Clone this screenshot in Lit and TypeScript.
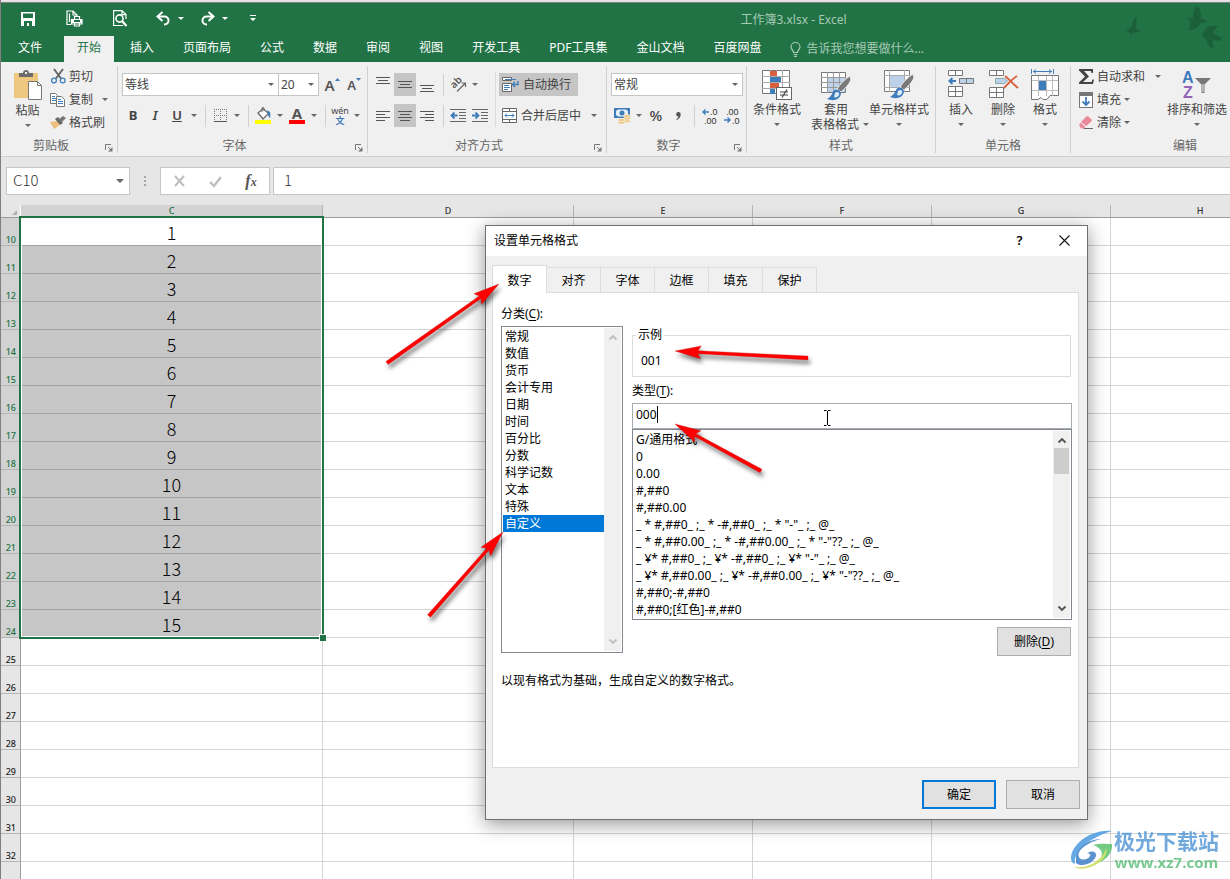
import { LitElement, html, svg, css, nothing } from "lit";
import { customElement, state } from "lit/decorators.js";
import { classMap } from "lit/directives/class-map.js";

/* ---------- shared styles ---------- */

const base = css`
  * { box-sizing: border-box; }
  button, input, select {
    font: inherit; color: inherit; margin: 0; padding: 0; border: 0;
    background: none; border-radius: 0; outline: none;
  }
  svg { display: block; flex: none; overflow: visible; }
  ul { list-style: none; margin: 0; padding: 0; }
`;

/* ---------- icons ---------- */

const icon = (w: number, h: number, body: unknown) =>
  html`<svg width=${w} height=${h} viewBox="0 0 ${w} ${h}" aria-hidden="true">${body}</svg>`;

const caret = (color = "#666") => icon(6, 3, svg`<path d="M0 0h6L3 3z" fill=${color} />`);

const lines = (y0: number, widths: number[][], step = 4) =>
  icon(14, 16, widths.map(([x, w], i) => svg`<rect x=${x} y=${y0 + i * step} width=${w} height="1" fill="#555" />`));

const brushTip = (x: number, y: number) => svg`
  <g transform="translate(${x} ${y})">
    <path d="M23 0 C18 3 13 8 10 13 L14 16 C19 12 22 8 24 4 Z" fill="#7a7a7a" stroke="#f0f0f0" stroke-width="1" />
    <path d="M8 14 C5 15 6 20 0 23 C5 25 12 25 14 18 C14 14 11 13 8 14Z" fill="#3f7cba" />
    <path d="M8 17 c2 -2 5 -1 4 2 c-1 2 -3 3 -5 2" fill="#dce9f6" />
  </g>`;

const icons = {
  save: icon(14, 14, svg`
    <path d="M0 0h14v14H0z" fill="#fff" />
    <path d="M2 1.500h10v4.500H2zM3 9h8v5H8v-3H6v3H3z" fill="#217346" />`),
  quickPrint: icon(17, 17, svg`
    <g fill="none" stroke="#fff" stroke-width="1.2">
      <path d="M5 14.5H1V1h6l4 4v2M3.500 12V3.500M7 1v4h4" />
      <path d="M5.500 9.500h10.500v4.500H5.500zM8.500 9.500v-3h5v3M8.500 12.500h5v3.500h-5z" />
    </g>
    <path d="M6 10h2v3H6zM14 10h2v3h-2z" fill="#fff" />`),
  preview: icon(14, 17, svg`
    <g fill="none" stroke="#fff" stroke-width="1.2">
      <path d="M10 15.500H.6V.6h8.400l4 4V9M9 .6v4h4" />
      <circle cx="6.500" cy="8.500" r="3.600" stroke-width="1.600" />
      <path d="M9 11l4.500 5" stroke-width="2.200" />
    </g>`),
  undo: icon(15, 13, svg`
    <path d="M2 4.500h6.500a4 4 0 0 1 0 8H8" fill="none" stroke="#fff" stroke-width="2" />
    <path d="M6.500 0L1.500 4.500L6.500 9" fill="none" stroke="#fff" stroke-width="2" />`),
  redo: icon(15, 13, svg`
    <path d="M13 4.500H6.500a4 4 0 0 0 0 8H7" fill="none" stroke="#fff" stroke-width="2" />
    <path d="M8.500 0L13.500 4.500L8.500 9" fill="none" stroke="#fff" stroke-width="2" />`),
  customize: icon(6, 7, svg`<path d="M0 0h6v1H0zM0 3h6L3 6z" fill="#fff" />`),
  bulb: icon(11, 15, svg`
    <path d="M3.500 10.500C3.500 8 1 7.500 1 5a4.500 4.500 0 0 1 9 0c0 2.500-2.500 3-2.500 5.500z M3.500 12.500h4M4 14.300h3" fill="none" stroke="#a7cab5" stroke-width="1.200" />`),
  paste: icon(28, 31, svg`
    <rect x="0" y="3" width="24" height="25" fill="#edc87e" />
    <path d="M5 7V3h4c0-4 6-4 6 0h4v4z" fill="#6b6b6b" /><rect x="11" y="2" width="2" height="2" fill="#f0f0f0" />
    <path d="M14.500 11.500h9l4 4v14h-13z" fill="#fff" stroke="#777" /><path d="M23.500 11.500v4h4" fill="none" stroke="#777" />`),
  cut: icon(15, 15, svg`
    <path d="M3 0L10 9.500M12 0L5 9.500" stroke="#666" stroke-width="2" />
    <g fill="none" stroke="#3f7cba" stroke-width="1.300"><circle cx="3" cy="11.500" r="2.400" /><circle cx="11.700" cy="11.500" r="2.400" /></g>`),
  copy: icon(16, 14, svg`
    <path d="M.5 .5h5l2 2v8h-7z" fill="#fff" stroke="#777" />
    <path d="M2 3.500h3M2 5.500h4M2 7.500h4" stroke="#3f7cba" />
    <path d="M6.500 3.500h5l3 3v7h-8z" fill="#fff" stroke="#777" />
    <path d="M8 6.500h3M8 8.500h5M8 10.500h5" stroke="#3f7cba" />`),
  brush: icon(16, 13, svg`
    <path d="M0 6l7-1 3 4-6 4z" fill="#edc07e" />
    <path d="M5 3l3-2 5 6-3 2z" fill="#666" />
    <path d="M9 3l4-3 3 2-4 4z" fill="#777" />`),
  borders: icon(13, 13, svg`
    <g fill="none" stroke="#777" stroke-dasharray="1 1"><path d="M.5 0v12M6.500 0v12M12.500 0v12M0 .5h13M0 6.500h13" /></g>
    <path d="M0 12.500h13" stroke="#555" />`),
  fill: icon(17, 17, svg`
    <path d="M3 6L8 1.500l5.500 5L8 12z" fill="#fff" stroke="#666" stroke-width="1.200" />
    <path d="M7 5V1.500C7 0 9 0 9 1.500V4" fill="none" stroke="#666" />
    <path d="M12 3.500c3 0 4 3 3 7.500-1-1-2-2-2-4z" fill="#3f7cba" />
    <rect x="0" y="13" width="16" height="4" fill="#ffff00" />`),
  grow: icon(5, 3, svg`<path d="M0 3h5L2.500 0z" fill="#3f7cba" />`),
  shrink: icon(5, 3, svg`<path d="M0 0h5L2.500 3z" fill="#3f7cba" />`),
  top: lines(0, [[0, 14], [2, 10], [0, 14]], 3),
  middle: lines(4, [[0, 14], [2, 10], [0, 14]], 3),
  bottom: lines(8, [[0, 14], [2, 10], [0, 14]], 3),
  left: lines(3, [[0, 14], [0, 9], [0, 14], [0, 9]], 3),
  center: lines(3, [[0, 14], [2, 10], [0, 14], [2, 10]], 3),
  right: lines(3, [[0, 14], [5, 9], [0, 14], [5, 9]], 3),
  orient: icon(16, 16, svg`
    <text x="0" y="0" transform="translate(4 12) rotate(-45)" font-size="10" font-weight="600" fill="#555">ab</text>
    <path d="M7 14.500L15 6.500M11.500 6h4v4" fill="none" stroke="#666" stroke-width="1.200" />`),
  outdent: icon(16, 13, svg`
    <path d="M0 .5h16M9 3.500h7M9 6.500h7M9 9.500h7M0 12.500h16" stroke="#666" />
    <path d="M7.500 6.500H2M4.500 3.500l-3 3 3 3" fill="none" stroke="#3f7cba" stroke-width="1.800" />`),
  indent: icon(16, 13, svg`
    <path d="M0 .5h16M9 3.500h7M9 6.500h7M9 9.500h7M0 12.500h16" stroke="#666" />
    <path d="M0 6.500h6M3.500 3.500l3 3-3 3" fill="none" stroke="#3f7cba" stroke-width="1.800" />`),
  wrap: icon(17, 15, svg`
    <path d="M.5 .5h9v3h-9zM.5 6.500h9v8h-9z" fill="#fff" stroke="#666" />
    <path d="M2 8.500h5M2 10.500h6M2 12.500h4M3 2.500h11" stroke="#3f7cba" />
    <path d="M16 4v3.500h-5M13 5l-2.500 2.500L13 10" fill="none" stroke="#3f7cba" stroke-width="1.400" />`),
  merge: icon(15, 15, svg`
    <path d="M.5 .5h14v14H.5zM0 3.500h15M0 11.500h15M7.500 0v3.500M7.500 11.500v3" fill="#fff" stroke="#666" />
    <path d="M3 7.500h9M5 5.500l-2 2 2 2M10 5.500l2 2-2 2" fill="none" stroke="#3f7cba" />`),
  currency: icon(17, 16, svg`
    <rect x="0" y="0" width="16" height="10" fill="#3f7cba" /><path d="M2 3l2-1.500h8L14 3v4l-2 1.500H4L2 7z" fill="#e6eff8" />
    <circle cx="8" cy="5" r="2.500" fill="#3f7cba" />
    <g fill="#edc87e" stroke="#f0f0f0" stroke-width=".7"><ellipse cx="13" cy="13" rx="3.500" ry="1.600" /><ellipse cx="13" cy="10.500" rx="3.500" ry="1.600" /><ellipse cx="13" cy="8" rx="3.500" ry="1.600" /><ellipse cx="7.500" cy="14.500" rx="3.500" ry="1.600" /><ellipse cx="7.500" cy="12" rx="3.500" ry="1.600" /></g>`),
  incDec: icon(15, 14, svg`
    <path d="M7 3H1M3.500 .5L1 3l2.500 2.500" fill="none" stroke="#3f7cba" stroke-width="1.400" />
    <g font-family="Liberation Sans" font-size="9" fill="#333"><text x="8" y="6">.0</text><text x="2" y="15">.00</text></g>`),
  decDec: icon(15, 14, svg`
    <path d="M0 11h6M3.500 8.500L6 11l-2.500 2.500" fill="none" stroke="#3f7cba" stroke-width="1.400" />
    <g font-family="Liberation Sans" font-size="9" fill="#333"><text x="2" y="6">.00</text><text x="8" y="15">.0</text></g>`),
  conditional: icon(30, 30, svg`
    <path d="M.5 .5h27v23h-27z" fill="#fff" stroke="#777" />
    <path d="M8.500 0v24M14.500 0v24M20.500 0v24M0 6.500h28M0 12.500h28M0 18.500h28" stroke="#aaa" />
    <path d="M8 1h7v5H8zM8 13h9v5H8z" fill="#d9603f" /><path d="M8 7h11v5H8zM8 19h5v5H8z" fill="#3f7cba" />
    <rect x="14.500" y="17.500" width="15" height="12" fill="#fff" stroke="#666" />
    <path d="M18 22h8M18 25h8M25 19.500l-5 8" stroke="#444" stroke-width="1.200" />`),
  tableFormat: icon(30, 30, svg`
    <path d="M.5 2.500h24v20h-24z" fill="#fff" stroke="#777" /><path d="M6 7h18v15H6z" fill="#bdd2ea" />
    <path d="M6.500 2v21M12.500 2v21M18.500 2v21M0 7.500h25M0 12.500h25M0 17.500h25" stroke="#999" />
    ${brushTip(6, 6)}`),
  cellStyles: icon(30, 30, svg`
    <path d="M.5 .5h25v21h-25z" fill="#fff" stroke="#777" /><path d="M6 6h14v11H6z" fill="#bdd2ea" />
    <path d="M5.500 0v22M20.500 0v22M0 5.500h26M0 17.500h26" stroke="#aaa" />
    ${brushTip(6, 4)}`),
  insert: icon(26, 30, svg`
    <g fill="#fff" stroke="#777"><path d="M.5 .5h14v5H.5zM7.500 .5v5M.5 16.500h14v10H.5zM7.500 16.500v10M.5 21.500h14" /></g>
    <path d="M11.500 8.500h14v5h-14zM18.500 8.500v5" fill="#bdd2ea" stroke="#777" />
    <path d="M8 11H2M4.500 8l-3 3 3 3" fill="none" stroke="#3f7cba" stroke-width="2" />`),
  remove: icon(29, 30, svg`
    <g fill="#fff" stroke="#777"><path d="M.5 .5h14v5H.5zM7.500 .5v5M.5 17.500h14v10H.5zM7.500 17.500v10M.5 22.500h14" /></g>
    <path d="M6.500 8.500h9l3 2.500-3 2.500h-9z" fill="#bdd2ea" stroke="#8aa" />
    <path d="M16 6c4 3 8 8 13 12M28 6c-5 3-9 8-13 12" fill="none" stroke="#d9603f" stroke-width="2" />`),
  format: icon(28, 30, svg`
    <path d="M.5 -1v5M22.500 -1v5M2 1.500h19M5 -.5L2.500 1.500 5 3.500M18 -.5l2.500 2-2.500 2" fill="none" stroke="#3f7cba" />
    <path d="M.5 5.500h27v20H19l-3 4h-4l-2-2-3 2H.5z" fill="#fff" stroke="#777" />
    <path d="M7.500 6v20M15.500 6v20M21.500 6v20M1 10.500h26M1 20.500h26" stroke="#bbb" />
    <rect x="8" y="11" width="7" height="9" fill="#3f7cba" />`),
  sum: icon(15, 15, svg`<path d="M0 0h14v4h-1.500l-.5-2H5l5 5.500L4 13h8.500l1-2.500H15L14 15H0v-1.500l6-6L0 1.500z" fill="#444" />`),
  fillDown: icon(14, 16, svg`
    <rect x=".5" y=".5" width="13" height="15" fill="#fff" stroke="#777" /><rect x="0" y="0" width="14" height="4" fill="#777" />
    <path d="M7 5v8M3.500 9.500L7 13l3.500-3.500" fill="none" stroke="#3f7cba" stroke-width="1.800" />`),
  clear: icon(14, 13, svg`
    <path d="M7 .8L9 0l4 4-1 2-5 4-5-4z" fill="#e88a9c" /><path d="M1.500 6.500l5 4.500-1.500 1.500H2L0 9z" fill="#e88a9c" />
    <path d="M5 12.500h9" stroke="#666" />`),
  sort: icon(30, 30, svg`
    <g font-family="Liberation Sans" font-size="16" font-weight="700">
      <text x="0" y="13" fill="#3f7cba">A</text>
      <text x="1" y="28" fill="#9363b8">Z</text>
    </g>
    <path d="M13 8h16l-6.500 6.500V23h-3v-8.500z" fill="#777" /><path d="M20.500 14v8h1v-8z" fill="#f0f0f0" />`),
  comma: icon(5, 8, svg`<path d="M2.500 0a2.200 2.200 0 0 1 2.200 2.300C4.700 5 3 7 .8 8l-.5-.8C1.500 6.500 2.200 5.500 2.300 4.500A2.200 2.200 0 0 1 2.500 0z" fill="#555" />`),
  launcher: icon(8, 8, svg`
    <path d="M.5 6V.5H6" fill="none" stroke="#777" /><path d="M3 3l3 3" stroke="#777" /><path d="M7.500 3v4.500H3L7.500 3z" fill="#777" />`),
  cancel: icon(11, 10, svg`<path d="M1 0l9 10M10 0L1 10" stroke="#bdbdbd" stroke-width="2" />`),
  accept: icon(13, 11, svg`<path d="M1 6l4 4 7-9" fill="none" stroke="#bdbdbd" stroke-width="2.400" />`),
  close: icon(11, 11, svg`<path d="M.5 .5l10 10M10.500 .5l-10 10" stroke="#111" stroke-width="1.100" />`),
};

const chevron = (up: boolean, color: string) =>
  icon(8, 5, svg`<path d=${up ? "M.5 4.500L4 1l3.500 3.500" : "M.5 .5L4 4 7.500 .5"} fill="none" stroke=${color} stroke-width="1.800" />`);

/* ---------- title bar, tabs and ribbon ---------- */

@customElement("xl-ribbon")
export class XlRibbon extends LitElement {
  static styles = [base, css`
    :host { display: block; flex: none; overflow: hidden; }
    .top { position: relative; background: #217346; color: #fff; }
    .title-row { display: flex; align-items: center; height: 33px; padding: 0 0 2px 17px; }
    .quick { display: flex; align-items: center; gap: 26px; }
    .quick button, .history button { display: grid; place-items: center; height: 20px; }
    .quick .q { width: 20px; }
    .history { display: flex; align-items: center; margin-left: 23px; gap: 3px; }
    .history .q { width: 20px; }
    .history .drop { width: 10px; margin-right: 8px; }
    .history .custom { width: 10px; margin-left: 7px; }
    .title { flex: 1; padding: 2px 0 0 99px; text-align: center; color: #a7cab5; line-height: 20px; }
    .birds { position: absolute; top: 0; right: 8px; pointer-events: none; }
    .tabs { display: flex; height: 26px; align-items: stretch; }
    .tabs button { padding: 0 13px; margin-right: 3px; line-height: 24px; padding-bottom: 2px; white-space: nowrap; }
    .tabs .file { padding: 0 19px 2px 17px; }
    .tabs .on { background: #f0f0f0; color: #217346; }
    .tell { display: flex; align-items: center; gap: 5px; margin-left: 13px; color: #a7cab5; }
    .tell input { width: 160px; color: #a7cab5; }
    .tell input::placeholder { color: #a7cab5; opacity: 1; }

    .ribbon { display: flex; height: 95px; background: #f0f0f0; border-bottom: 1px solid #d0d0d0; color: #444; padding-top: 4px; }
    .group { display: flex; flex-direction: column; height: 87px; flex: none; border-right: 1px solid #d0d0d0; }
    .group:last-child { border-right: 0; }
    .body { flex: 1; display: flex; padding-left: 4px; }
    .foot { display: flex; align-items: center; height: 16px; color: #666; }
    .foot span { flex: 1; text-align: center; line-height: 16px; padding-top: 1px; }
    .foot button { width: 16px; height: 16px; display: grid; place-items: center; padding: 5px 0 0 0; }
    .g-clip { width: 117px; } .g-font { width: 250px; } .g-align { width: 239px; }
    .g-num { width: 140px; } .g-style { width: 189px; } .g-cell { width: 135px; } .g-edit { width: 228px; }

    .rows { display: flex; flex-direction: column; gap: 8px; padding-top: 7px; }
    .row { display: flex; align-items: center; height: 23px; }
    .ib { display: grid; place-items: center; width: 22px; height: 23px; }
    .ib.on { background: #c5c5c5; }
    .ib.text { font-size: 13px; line-height: 16px; color: #444; padding-bottom: 2px; }
    .ib.pct { font-size: 15px; font-weight: 500; }
    .b { font-weight: 700; } .i { font-style: italic; font-weight: 600; } .u { text-decoration: underline; font-weight: 600; }
    .dr { display: grid; place-items: center; width: 12px; height: 23px; }
    .sep { width: 1px; height: 22px; background: #d0d0d0; margin: 0 3px 0 5px; }
    .tall { width: 1px; height: 55px; background: #dadada; margin: 6px 3px 0 4px; }
    .combo { display: grid; }
    .combo > * { grid-area: 1 / 1; }
    .combo > svg { justify-self: end; align-self: center; margin-right: 5px; pointer-events: none; }
    .combo select { height: 23px; appearance: none; background: #fff; border: 1px solid #c6c6c6; padding-left: 2px; width: 100%; }
    .wide { width: 157px; } .narrow { width: 41px; margin-left: -1px; margin-right: 2px; } .fmt { width: 132px; }
    .size { display: flex; align-items: flex-start; justify-content: center; padding-top: 1px; color: #555; font-weight: 600; font-size: 15px; line-height: 22px; }
    .size svg { margin-top: 4px; }
    .size.small { font-size: 13px; }
    .color { font-weight: 700; font-size: 15px; line-height: 13px; color: #555; }
    .color span { display: block; width: 16px; text-align: center; border-bottom: 4px solid #f00; }
    .wen { font-size: 9px; line-height: 10px; text-align: center; align-content: center; }
    .wen b { display: block; color: #3f7cba; font-size: 9px; }
    .labelled { display: flex; align-items: center; gap: 4px; height: 23px; padding: 0 7px 0 3px; white-space: nowrap; }
    .labelled.on { background: #c5c5c5; }

    .big { display: flex; flex-direction: column; align-items: center; padding-top: 4px; line-height: 15px; white-space: nowrap; }
    .big .lab { display: block; margin-top: 2px; }
    .big .under { height: 15px; display: grid; place-items: center; }
    .big .inline { display: flex; align-items: center; gap: 4px; padding-left: 8px; }
    .paste, .insert { width: 42px; }
    .paste { width: 45px; }
    .cond { width: 52px; } .table { width: 66px; } .style { width: 60px; }
    .sort { width: 68px; }
    .stack { display: flex; flex-direction: column; }
    .stack > div { display: flex; align-items: center; height: 23px; padding-bottom: 2px; }
    .mini { display: flex; align-items: center; gap: 3px; height: 21px; line-height: 20px; white-space: nowrap; }
    .mini > span:first-child { width: 16px; display: grid; place-items: center; }
    .clip .dr { margin-left: 6px; }
    .edit { width: 88px; padding-left: 3px; }
    .edit > div:first-child .dr { margin-left: 7px; }
  `];

  private big(label: string, art: unknown, kind: string, second = "") {
    return html`<button class="big ${kind}">
      ${art}
      <span class="lab">${label}</span>
      ${second
        ? html`<span class="inline">${second}${caret()}</span>`
        : html`<span class="under">${caret()}</span>`}
    </button>`;
  }

  private ib(label: string, art: unknown, on = false) {
    return html`<button class=${classMap({ ib: true, on })} aria-label=${label}>${art}</button>`;
  }

  private drop(label: string) {
    return html`<button class="dr" aria-label=${label}>${caret()}</button>`;
  }

  private foot(label: string, launcher = true) {
    return html`<div class="foot"><span>${label}</span>${launcher
      ? html`<button aria-label="${label}设置">${icons.launcher}</button>` : nothing}</div>`;
  }

  private mini(label: string, art: unknown, drop = false) {
    return html`<div><button class="mini"><span>${art}</span><span>${label}</span></button>${drop ? this.drop(label) : nothing}</div>`;
  }

  render() {
    const tabs = ["开始", "插入", "页面布局", "公式", "数据", "审阅", "视图", "开发工具", "PDF工具集", "金山文档", "百度网盘"];
    return html`
      <header class="top">
        <svg class="birds" width="100" height="52" viewBox="1122 3 100 52" aria-hidden="true">
          <g fill="#1b6039">
            <path d="M1125 29c3 1 5 0 7-3 0-4 2-8 5-9 0 5-2 9 0 12l4 3-8 1-2 2-2-3z" />
            <path d="M1186 18c3 0 5 1 7 0 0-5 1-9 4-12 4 4 4 8 4 12l6 3c-2 3-5 2-7 2-1 4-5 7-12 7 2-3 3-6 2-9z" />
            <path d="M1202 34c3-3 4-7 8-8h9c-4 2-6 5-5 8l8 4-2 3c-3-1-6-1-8 0 0 3 2 5 2 8-5-2-8-6-8-11l-2 1z" />
          </g>
        </svg>
        <div class="title-row">
          <div class="quick">
            <button class="q" aria-label="保存">${icons.save}</button>
            <button class="q" aria-label="快速打印">${icons.quickPrint}</button>
            <button class="q" aria-label="打印预览">${icons.preview}</button>
          </div>
          <div class="history">
            <button class="q" aria-label="撤消">${icons.undo}</button>
            <button class="drop" aria-label="撤消列表">${caret("#fff")}</button>
            <button class="q" aria-label="恢复">${icons.redo}</button>
            <button class="drop" aria-label="恢复列表">${caret("#fff")}</button>
            <button class="custom" aria-label="自定义快速访问工具栏">${icons.customize}</button>
          </div>
          <div class="title">工作簿3.xlsx - Excel</div>
        </div>
        <nav class="tabs">
          <button class="file">文件</button>
          ${tabs.map((t, i) => html`<button class=${classMap({ on: i === 0 })}>${t}</button>`)}
          <label class="tell">${icons.bulb}<input aria-label="告诉我" placeholder="告诉我您想要做什么..." /></label>
        </nav>
      </header>

      <div class="ribbon">
        <section class="group g-clip">
          <div class="body">
            ${this.big("粘贴", icons.paste, "paste")}
            <div class="stack clip">
              ${this.mini("剪切", icons.cut)}
              ${this.mini("复制", icons.copy, true)}
              ${this.mini("格式刷", icons.brush)}
            </div>
          </div>
          ${this.foot("剪贴板")}
        </section>

        <section class="group g-font">
          <div class="body rows">
            <div class="row">
              <span class="combo wide"><select aria-label="字体"><option>等线</option></select>${caret()}</span>
              <span class="combo narrow"><select aria-label="字号"><option>20</option></select>${caret()}</span>
              <button class="ib size" aria-label="增大字号">A${icons.grow}</button>
              <button class="ib size small" aria-label="减小字号">A${icons.shrink}</button>
            </div>
            <div class="row">
              <button class="ib text b">B</button>
              <button class="ib text i">I</button>
              <button class="ib text u">U</button>
              ${this.drop("下划线")}
              <span class="sep"></span>
              ${this.ib("边框", icons.borders)}${this.drop("边框选项")}
              <span class="sep"></span>
              ${this.ib("填充颜色", icons.fill)}${this.drop("填充颜色选项")}
              <button class="ib color" aria-label="字体颜色"><span>A</span></button>${this.drop("字体颜色选项")}
              <span class="sep"></span>
              <button class="ib wen" aria-label="拼音">wén<b>文</b></button>${this.drop("拼音选项")}
            </div>
          </div>
          ${this.foot("字体")}
        </section>

        <section class="group g-align">
          <div class="body">
            <div class="rows">
              <div class="row">
                ${this.ib("顶端对齐", icons.top)}${this.ib("垂直居中", icons.middle, true)}${this.ib("底端对齐", icons.bottom)}
                <span class="sep"></span>
                ${this.ib("方向", icons.orient)}${this.drop("方向选项")}
              </div>
              <div class="row">
                ${this.ib("左对齐", icons.left)}${this.ib("居中", icons.center, true)}${this.ib("右对齐", icons.right)}
                <span class="sep"></span>
                ${this.ib("减少缩进量", icons.outdent)}${this.ib("增加缩进量", icons.indent)}
              </div>
            </div>
            <span class="tall"></span>
            <div class="rows">
              <div class="row"><button class="labelled on">${icons.wrap}<span>自动换行</span></button></div>
              <div class="row"><button class="labelled">${icons.merge}<span>合并后居中</span></button>${this.drop("合并选项")}</div>
            </div>
          </div>
          ${this.foot("对齐方式")}
        </section>

        <section class="group g-num">
          <div class="body rows">
            <div class="row"><span class="combo fmt"><select aria-label="数字格式"><option>常规</option></select>${caret()}</span></div>
            <div class="row">
              ${this.ib("会计数字格式", icons.currency)}${this.drop("货币")}
              <button class="ib text pct">%</button>
              ${this.ib("千位分隔样式", icons.comma)}
              <span class="sep"></span>
              ${this.ib("增加小数位数", icons.incDec)}${this.ib("减少小数位数", icons.decDec)}
            </div>
          </div>
          ${this.foot("数字")}
        </section>

        <section class="group g-style">
          <div class="body">
            ${this.big("条件格式", icons.conditional, "cond")}
            ${this.big("套用", icons.tableFormat, "table", "表格格式")}
            ${this.big("单元格样式", icons.cellStyles, "style")}
          </div>
          ${this.foot("样式", false)}
        </section>

        <section class="group g-cell">
          <div class="body">
            ${this.big("插入", icons.insert, "insert")}
            ${this.big("删除", icons.remove, "insert")}
            ${this.big("格式", icons.format, "insert")}
          </div>
          ${this.foot("单元格", false)}
        </section>

        <section class="group g-edit">
          <div class="body">
            <div class="stack edit">
              ${this.mini("自动求和", icons.sum, true)}
              ${this.mini("填充", icons.fillDown, true)}
              ${this.mini("清除", icons.clear, true)}
            </div>
            ${this.big("排序和筛选", icons.sort, "sort")}
          </div>
          ${this.foot("编辑", false)}
        </section>
      </div>
    `;
  }
}

/* ---------- formula bar and grid ---------- */

@customElement("xl-sheet")
export class XlSheet extends LitElement {
  static styles = [base, css`
    :host { display: flex; flex-direction: column; flex: 1; min-height: 0; overflow: hidden; background: #e6e6e6; }
    .bar { display: flex; flex: none; height: 48px; padding: 10px 0 10px 5px; font: 300 15px/26px "Noto Sans CJK SC", sans-serif; color: #333; }
    .box { display: flex; align-items: center; background: #fff; border: 1px solid #c6c6c6; height: 28px; }
    .name { width: 124px; padding-left: 6px; }
    .name input { flex: 1; min-width: 0; }
    .name input, .formula input { padding-bottom: 2px; }
    .name button { display: grid; place-items: center; width: 18px; height: 26px; }
    .dots { display: grid; place-content: center; gap: 2px; width: 30px; height: 28px; }
    .dots i { width: 2px; height: 2px; background: #a6a6a6; }
    .fx { width: 110px; }
    .fx button { flex: 1; height: 26px; display: grid; place-items: center; }
    .fx .fn { font: italic 700 16px/20px "Liberation Serif", serif; color: #555; display: block; }
    .fn small { font-size: 12px; }
    .formula { flex: 1; margin-left: 3px; border-right: 0; padding-left: 10px; }
    .formula input { width: 100%; }

    .sheet { position: relative; flex: 1; overflow: hidden; background: #fff; }
    table { table-layout: fixed; border-spacing: 0; width: 0; }
    th, td { padding: 0; overflow: hidden; }
    thead th { height: 13px; font: 500 9px/12px "Noto Sans", sans-serif; color: #333; background: #e6e6e6; border-right: 1px solid #b5b5b5; border-bottom: 1px solid #9b9b9b; }
    thead .sel { background: #d2d2d2; color: #217346; }
    thead .corner { border-right-color: #fff; }
    .corner svg { margin: 2px 4px 0 11px; }
    tbody th { height: 28px; vertical-align: bottom; text-align: right; padding-right: 4px; font: 500 9px/11px "Noto Sans", sans-serif; color: #222; background: #e6e6e6; border-right: 1px solid #9b9b9b; border-bottom: 1px solid #b5b5b5; }
    tbody th.sel { background: #d2d2d2; color: #217346; }
    td { border-right: 1px solid #d4d4d4; border-bottom: 1px solid #d4d4d4; }
    td.val { vertical-align: bottom; text-align: center; padding-bottom: 2px; font: 300 18px/22px "Noto Sans CJK SC", sans-serif; color: #000; background: #c6c6c6; border-bottom-color: #a3a3a3; }
    td.val.first { background: #fff; }
    .range { position: absolute; left: 18px; top: 11px; width: 305px; height: 423px; border: 2px solid #217346; pointer-events: none; box-shadow: inset -1px -1px 0 #fff, inset 1px 0 0 #fff; }
    .handle { position: absolute; right: -4px; bottom: -4px; width: 7px; height: 7px; background: #217346; border: 1px solid #fff; border-width: 1px 0 0 1px; }
    .c-head { width: 20px; } .c-c { width: 302px; } .c-d { width: 251px; } .c-n { width: 179px; }
  `];

  @state() private wide = window.innerWidth;
  @state() private high = window.innerHeight;

  private measure = () => {
    this.wide = window.innerWidth;
    this.high = window.innerHeight;
  };

  connectedCallback() {
    super.connectedCallback();
    window.addEventListener("resize", this.measure);
  }

  disconnectedCallback() {
    window.removeEventListener("resize", this.measure);
    super.disconnectedCallback();
  }

  render() {
    const colCount = 2 + Math.max(1, Math.ceil((this.wide - 574) / 179));
    const rowCount = Math.max(1, Math.floor((this.high - 218) / 28));
    const cols = Array.from({ length: colCount }, (_, i) => String.fromCharCode(67 + i));
    const rows = Array.from({ length: rowCount }, (_, i) => i + 10);
    return html`
      <div class="bar">
        <div class="box name"><input aria-label="名称框" .value=${"C10"} /><button aria-label="名称列表">${icon(8, 4, svg`<path d="M0 0h8L4 4z" fill="#666" />`)}</button></div>
        <div class="dots"><i></i><i></i><i></i></div>
        <div class="box fx">
          <button aria-label="取消">${icons.cancel}</button>
          <button aria-label="输入">${icons.accept}</button>
          <button class="fn" aria-label="插入函数">f<small>x</small></button>
        </div>
        <div class="box formula"><input aria-label="编辑栏" .value=${"1"} /></div>
      </div>
      <div class="sheet">
        <table>
          <colgroup>
            <col class="c-head" /><col class="c-c" /><col class="c-d" />
            ${cols.slice(2).map(() => html`<col class="c-n" />`)}
          </colgroup>
          <thead><tr>
            <th class="corner">${icon(5, 5, svg`<path d="M5 0v5H0z" fill="#b0b0b0" />`)}</th>
            ${cols.map((c, i) => html`<th class=${classMap({ sel: i === 0 })}>${c}</th>`)}
          </tr></thead>
          <tbody>
            ${rows.map((r) => {
              const inSel = r <= 24;
              return html`<tr>
                <th class=${classMap({ sel: inSel })}>${r}</th>
                ${cols.map((_, i) => i === 0 && inSel
                  ? html`<td class=${classMap({ val: true, first: r === 10 })}>${r - 9}</td>`
                  : html`<td></td>`)}
              </tr>`;
            })}
            <tr><th></th>${cols.map(() => html`<td></td>`)}</tr>
          </tbody>
        </table>
        <div class="range"><span class="handle"></span></div>
      </div>
    `;
  }
}

/* ---------- cell format dialog ---------- */

@customElement("format-dialog")
export class FormatDialog extends LitElement {
  static styles = [base, css`
    :host { display: block; background: #f0f0f0; border: 1px solid #707070; box-shadow: 0 4px 18px rgba(0, 0, 0, 0.42); color: #000; line-height: 18px; }
    .head { display: flex; align-items: center; height: 30px; background: #fff; padding-left: 8px; }
    .head h2 { flex: 1; margin: 0; font-size: 12px; font-weight: 400; }
    .head button { display: grid; place-items: center; width: 45px; height: 30px; padding-bottom: 2px; }
    .head .help { font-size: 13px; font-weight: 600; }
    .tabs { display: flex; align-items: flex-end; height: 28px; margin: 9px 8px -1px 6px; position: relative; }
    .tabs button { width: 54px; height: 25px; margin-bottom: 1px; padding-top: 2px; border: 1px solid #dcdcdc; border-width: 1px 1px 0 0; }
    .tabs .on { width: 55px; height: 28px; margin-bottom: 0; background: #fff; border-width: 1px 1px 0 1px; }
    .panel { background: #fff; border: 1px solid #dcdcdc; margin: 0 8px 0 6px; padding: 12px 6px 77px 8px; }
    .cols { display: grid; grid-template-columns: 122px 1fr; gap: 9px; }
    .cap { display: block; height: 18px; }
    u { text-underline-offset: 2px; }
    .list { display: flex; background: #fff; border: 1px solid #828790; padding: 1px; }
    .list ul { flex: 1; line-height: 17px; }
    .list li { height: 17px; padding-left: 2px; white-space: pre; }
    .list li.on { background: #0078d7; color: #fff; }
    .cats { height: 327px; margin-top: 3px; }
    .scroll { display: flex; flex-direction: column; align-items: center; width: 17px; background: #f0f0f0; padding: 7px 0; }
    .scroll .thumb { width: 15px; height: 26px; margin-top: 5px; background: #cdcdcd; }
    .scroll .gap { flex: 1; }
    .right { display: flex; flex-direction: column; }
    fieldset { margin: 21px 1px 0 0; border: 1px solid #dcdcdc; padding: 8px 8px 6px 8px; min-width: 0; }
    legend { padding: 0 2px; margin-left: -5px; height: 18px; }
    output { display: block; height: 18px; }
    .type { margin-top: 5px; }
    .field { position: relative; margin-top: 3px; }
    .field input { display: block; width: 100%; height: 26px; border: 1px solid #a8abb0; background: #fff; padding: 0 3px 3px; }
    .cursor { position: absolute; left: 25px; top: 3px; width: 1px; height: 17px; background: #000; }
    .formats { height: 191px; }
    .cmd { width: 74px; height: 29px; background: #e1e1e1; border: 1px solid #adadad; }
    .del { align-self: flex-end; margin: 7px 1px 0 0; }
    .note { margin: 16px 0 0; }
    .foot { display: flex; justify-content: flex-end; gap: 10px; padding: 12px 7px 10px 0; }
    .primary { border: 2px solid #0078d7; }
  `];

  render() {
    const cats = ["常规", "数值", "货币", "会计专用", "日期", "时间", "百分比", "分数", "科学记数", "文本", "特殊", "自定义"];
    const formats = [
      "G/通用格式", "0", "0.00", "#,##0", "#,##0.00",
      '_ * #,##0_ ;_ * -#,##0_ ;_ * "-"_ ;_ @_ ',
      '_ * #,##0.00_ ;_ * -#,##0.00_ ;_ * "-"??_ ;_ @_ ',
      '_ ¥* #,##0_ ;_ ¥* -#,##0_ ;_ ¥* "-"_ ;_ @_ ',
      '_ ¥* #,##0.00_ ;_ ¥* -#,##0.00_ ;_ ¥* "-"??_ ;_ @_ ',
      "#,##0;-#,##0", "#,##0;[红色]-#,##0",
    ];
    return html`
      <div class="head">
        <h2>设置单元格格式</h2>
        <button class="help" aria-label="帮助">?</button>
        <button aria-label="关闭">${icons.close}</button>
      </div>
      <div class="tabs" role="tablist">
        ${["数字", "对齐", "字体", "边框", "填充", "保护"].map((t, i) =>
          html`<button role="tab" aria-selected=${i === 0} class=${classMap({ on: i === 0 })}>${t}</button>`)}
      </div>
      <div class="panel">
        <div class="cols">
          <div>
            <span class="cap" id="cat">分类(<u>C</u>):</span>
            <div class="list cats">
              <ul role="listbox" aria-labelledby="cat">
                ${cats.map((c) => html`<li role="option" class=${classMap({ on: c === "自定义" })} aria-selected=${c === "自定义"}>${c}</li>`)}
              </ul>
              <div class="scroll">${chevron(true, "#bfbfbf")}<span class="gap"></span>${chevron(false, "#bfbfbf")}</div>
            </div>
          </div>
          <div class="right">
            <fieldset><legend>示例</legend><output>001</output></fieldset>
            <label class="cap type" for="type" id="type-label">类型(<u>T</u>):</label>
            <div class="field"><input id="type" .value=${"000"} /><span class="cursor"></span></div>
            <div class="list formats">
              <ul role="listbox" aria-labelledby="type-label">
                ${formats.map((f) => html`<li role="option">${f}</li>`)}
              </ul>
              <div class="scroll">${chevron(true, "#505050")}<span class="thumb"></span><span class="gap"></span>${chevron(false, "#505050")}</div>
            </div>
            <button class="cmd del">删除(<u>D</u>)</button>
          </div>
        </div>
        <p class="note">以现有格式为基础，生成自定义的数字格式。</p>
      </div>
      <div class="foot"><button class="cmd primary">确定</button><button class="cmd">取消</button></div>
    `;
  }
}

/* ---------- page ---------- */

@customElement("app-root")
export class AppRoot extends LitElement {
  static styles = [base, css`
    :host { display: flex; flex-direction: column; position: relative; height: 100vh; overflow: hidden; border-left: 1px solid #808080; font: 12px/16px "Noto Sans", "Noto Sans CJK SC", sans-serif; }
    .edge { flex: none; height: 3px; background: #e4e4e4; border-bottom: 1px solid #808080; }
    .dialog { position: absolute; left: 484px; top: 225px; width: 603px; }
    .notes { position: absolute; left: -1px; top: 0; pointer-events: none; filter: drop-shadow(2px 4px 2px rgba(0, 0, 0, 0.5)); }
    .pointer { position: absolute; left: 822px; top: 410px; }
    .mark { position: absolute; right: 11px; bottom: 8px; display: flex; align-items: center; gap: 1px; opacity: 0.85; }
    .mark strong { display: block; font-size: 21px; line-height: 24px; color: #5a9bd8; }
    .mark a { display: block; font: 700 15px/18px "Open Sans", "Noto Sans", sans-serif; color: #62c07e; text-decoration: none; text-align: center; }
  `];

  private arrow(x1: number, y1: number, x2: number, y2: number) {
    const len = Math.hypot(x2 - x1, y2 - y1);
    const ang = (Math.atan2(y1 - y2, x1 - x2) * 180) / Math.PI;
    return svg`<path transform="translate(${x2} ${y2}) rotate(${ang})" fill="#ff0000" stroke="#c01010" stroke-width=".3"
      d="M0 0L26 -6.500L23 -1.500L${len} -1.900V1.900L23 1.500L26 6.500Z" />`;
  }

  render() {
    return html`
      <div class="edge"></div>
      <xl-ribbon></xl-ribbon>
      <xl-sheet></xl-sheet>
      <format-dialog class="dialog" role="dialog" aria-label="设置单元格格式"></format-dialog>
      <svg class="notes" width="1230" height="879" viewBox="0 0 1230 879" aria-hidden="true">
        ${this.arrow(387, 363, 499, 284)}
        ${this.arrow(808, 358, 675, 351)}
        ${this.arrow(761, 471, 675, 424)}
        ${this.arrow(429, 616, 503, 532)}
      </svg>
      <svg class="pointer" width="9" height="16" viewBox="0 0 9 16" aria-hidden="true">
        <path d="M1 .5h2.500M5 .5H7.500M4.500 1v14M1 15.500h2.500M5 15.500H7.500" stroke="#000" fill="none" />
      </svg>
      <div class="mark">
        <svg width="42" height="40" viewBox="0 0 42 40" aria-hidden="true">
          <path d="M41 1C22 -1 2 12 0 27c0 4 1 6 4 7C2 24 14 9 41 1z" fill="#4a9be0" />
          <path d="M5 33c6 5 18 0 20-7 1-5-6-6-9-2 2-1 4 0 3 2-2 4-9 5-11 1C5 20 18 12 30 9 17 9 5 19 5 27z" fill="#3f7fc8" />
          <path d="M22 15c6-2 14-1 19-1 1 9-6 16-14 19 5-6 7-14-5-18z" fill="#5cc26e" />
          <path d="M3 37c10 1 19-2 25-8 4-3 6-7 7-11 3 8-8 18-19 20-5 1-10 1-13-1z" fill="#c9dc55" />
        </svg>
        <div><strong>极光下载站</strong><a href="#">www.xz7.com</a></div>
      </div>
    `;
  }
}
